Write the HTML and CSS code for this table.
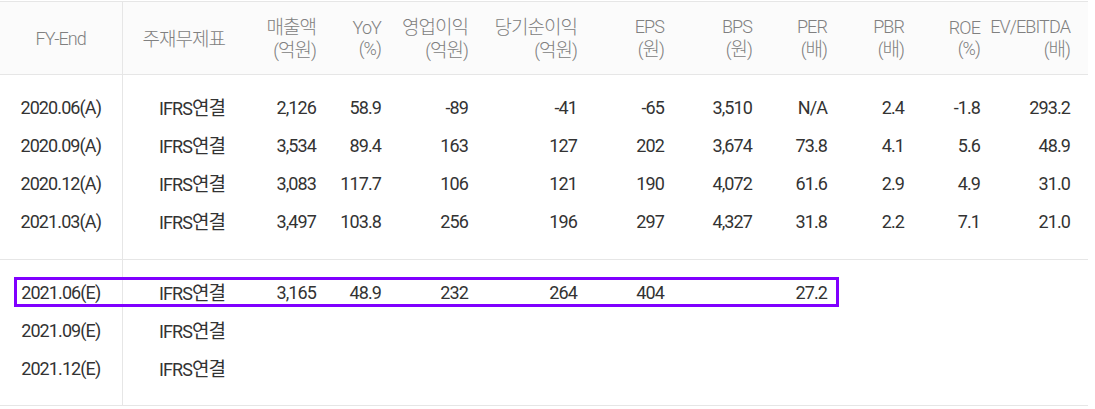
FILE: index.html
```html
<!DOCTYPE html>
<html lang="ko">
<head>
<meta charset="utf-8">
<link rel="stylesheet" href="styles.css">
</head>
<body>
<div class="wrap">
<table class="fin">
  <colgroup>
    <col style="width:122px"><col style="width:113px"><col style="width:91px"><col style="width:65px">
    <col style="width:87px"><col style="width:109px"><col style="width:87px"><col style="width:88px">
    <col style="width:75px"><col style="width:77px"><col style="width:76px"><col style="width:98px">
  </colgroup>
  <thead>
    <tr>
      <th class="c1">FY-End</th>
      <th><span class="ko">주재무제표</span></th>
      <th><span class="ko">매출액</span><br>(<span class="ko">억원</span>)</th>
      <th>YoY<br>(%)</th>
      <th><span class="ko">영업이익</span><br>(<span class="ko">억원</span>)</th>
      <th><span class="ko">당기순이익</span><br>(<span class="ko">억원</span>)</th>
      <th>EPS<br>(<span class="ko">원</span>)</th>
      <th>BPS<br>(<span class="ko">원</span>)</th>
      <th>PER<br>(<span class="ko">배</span>)</th>
      <th>PBR<br>(<span class="ko">배</span>)</th>
      <th>ROE<br>(%)</th>
      <th class="last">EV/EBITDA<br>(<span class="ko">배</span>)</th>
    </tr>
  </thead>
  <tbody class="grp">
    <tr class="first"><td class="c1">2020.06(A)</td><td>IFRS<span class="ko">연결</span></td><td>2,126</td><td>58.9</td><td>-89</td><td>-41</td><td>-65</td><td>3,510</td><td>N/A</td><td>2.4</td><td>-1.8</td><td class="last">293.2</td></tr>
    <tr><td class="c1">2020.09(A)</td><td>IFRS<span class="ko">연결</span></td><td>3,534</td><td>89.4</td><td>163</td><td>127</td><td>202</td><td>3,674</td><td>73.8</td><td>4.1</td><td>5.6</td><td class="last">48.9</td></tr>
    <tr><td class="c1">2020.12(A)</td><td>IFRS<span class="ko">연결</span></td><td>3,083</td><td>117.7</td><td>106</td><td>121</td><td>190</td><td>4,072</td><td>61.6</td><td>2.9</td><td>4.9</td><td class="last">31.0</td></tr>
    <tr class="lastrow"><td class="c1">2021.03(A)</td><td>IFRS<span class="ko">연결</span></td><td>3,497</td><td>103.8</td><td>256</td><td>196</td><td>297</td><td>4,327</td><td>31.8</td><td>2.2</td><td>7.1</td><td class="last">21.0</td></tr>
  </tbody>
  <tbody class="grp">
    <tr class="first"><td class="c1">2021.06(E)</td><td>IFRS<span class="ko">연결</span></td><td>3,165</td><td>48.9</td><td>232</td><td>264</td><td>404</td><td></td><td>27.2</td><td></td><td></td><td class="last"></td></tr>
    <tr><td class="c1">2021.09(E)</td><td>IFRS<span class="ko">연결</span></td><td></td><td></td><td></td><td></td><td></td><td></td><td></td><td></td><td></td><td class="last"></td></tr>
    <tr class="lastrow"><td class="c1">2021.12(E)</td><td>IFRS<span class="ko">연결</span></td><td></td><td></td><td></td><td></td><td></td><td></td><td></td><td></td><td></td><td class="last"></td></tr>
  </tbody>
</table>
<div class="highlight"></div>
</div>
</body>
</html>
```

FILE: styles.css
```css
html, body {
  margin: 0;
  padding: 0;
  background: #ffffff;
}
.wrap {
  position: relative;
  width: 1088px;
  padding-top: 1px;
}
.fin {
  width: 1088px;
  table-layout: fixed;
  border-collapse: collapse;
  font-family: Roboto, "Noto Sans CJK KR", sans-serif;
  font-size: 18px;
  letter-spacing: -0.9px;
  color: #333333;
}
.fin .ko {
  font-family: "Noto Sans CJK KR", sans-serif;
  font-size: 19px;
  letter-spacing: -1px;
}
.fin thead tr {
  background: #fbfbfb;
  border-top: 1px solid #e6e6e6;
  border-bottom: 1px solid #e6e6e6;
}
.fin th {
  height: 72px;
  padding: 0 10px 0 0;
  font-weight: 300;
  color: #808080;
  text-align: right;
  line-height: 21px;
  vertical-align: middle;
}
.fin td {
  height: 38px;
  padding: 0 10px 0 0;
  text-align: right;
  line-height: 20px;
  vertical-align: middle;
}
.fin .c1 {
  text-align: center;
  padding: 0;
  border-right: 1px solid #e6e6e6;
}
.fin .last {
  padding-right: 18px;
}
.fin .grp {
  border-bottom: 1px solid #e6e6e6;
}
.fin tr.first td {
  padding-top: 14px;
  height: 38px;
}
.fin .grp:first-of-type tr.lastrow td {
  padding-bottom: 18px;
}
.fin tbody.grp + tbody.grp tr.lastrow td {
  padding-bottom: 17px;
}
.highlight {
  position: absolute;
  left: 14px;
  top: 277px;
  width: 819px;
  height: 24px;
  border: 3px solid #8000ff;
}
```
